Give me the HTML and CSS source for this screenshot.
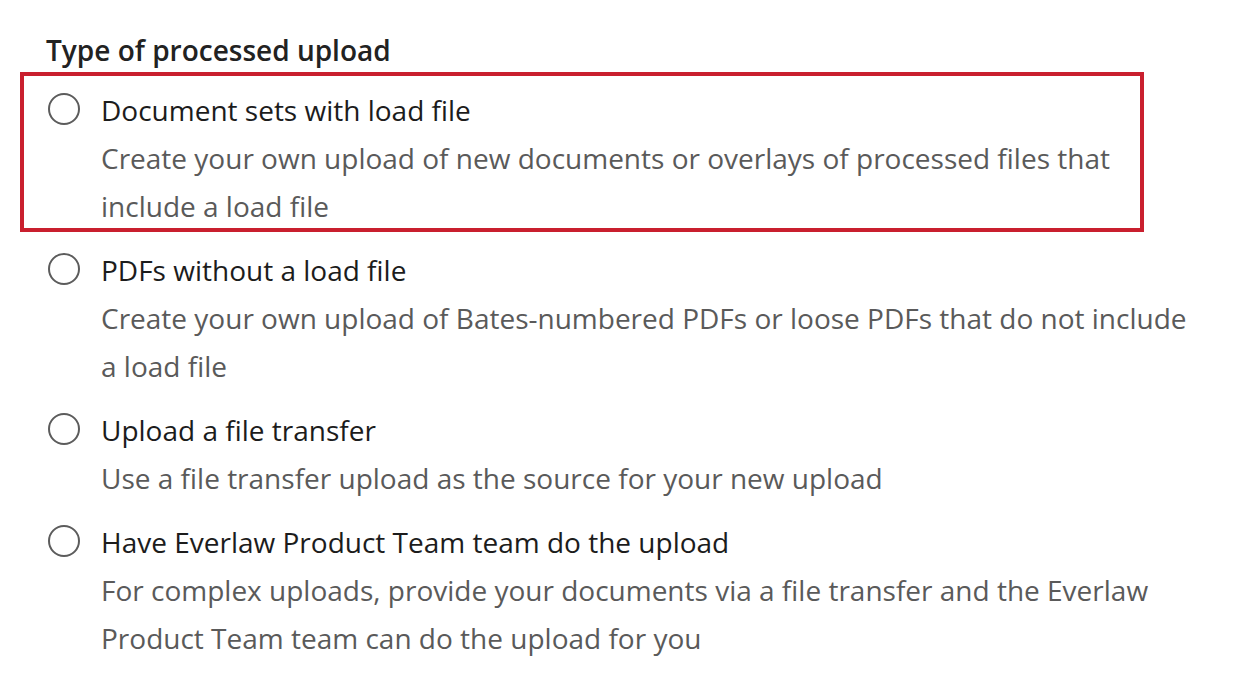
FILE: index.html
```html
<!DOCTYPE html>
<html lang="en">
<head>
  <meta charset="UTF-8">
  <title>Type of processed upload</title>
  <link rel="stylesheet" href="styles.css">
</head>
<body>
  <div class="panel">
    <h2 class="panel-title">Type of processed upload</h2>

    <div class="option-list" role="radiogroup">
      <label class="option is-highlighted">
        <input type="radio" name="uploadType" class="option-input">
        <span class="radio"></span>
        <span class="option-body">
          <span class="option-title">Document sets with load file</span>
          <span class="option-desc">Create your own upload of new documents or overlays of processed files that include a load file</span>
        </span>
      </label>

      <label class="option">
        <input type="radio" name="uploadType" class="option-input">
        <span class="radio"></span>
        <span class="option-body">
          <span class="option-title">PDFs without a load file</span>
          <span class="option-desc">Create your own upload of Bates-numbered PDFs or loose PDFs that do not include a load file</span>
        </span>
      </label>

      <label class="option">
        <input type="radio" name="uploadType" class="option-input">
        <span class="radio"></span>
        <span class="option-body">
          <span class="option-title">Upload a file transfer</span>
          <span class="option-desc">Use a file transfer upload as the source for your new upload</span>
        </span>
      </label>

      <label class="option">
        <input type="radio" name="uploadType" class="option-input">
        <span class="radio"></span>
        <span class="option-body">
          <span class="option-title">Have Everlaw Product Team team do the upload</span>
          <span class="option-desc">For complex uploads, provide your documents via a file transfer and the Everlaw Product Team team can do the upload for you</span>
        </span>
      </label>
    </div>
  </div>
</body>
</html>
```

FILE: styles.css
```css
:root {
  --text: #1c1c1c;
  --text-secondary: #5a5a5a;
  --radio-border: #5c5c5c;
  --highlight: #c91f2e;
  --line: 48px;
}

* {
  margin: 0;
  padding: 0;
  box-sizing: border-box;
}

body {
  font-family: "Open Sans", "Liberation Sans", sans-serif;
  font-size: 28px;
  color: var(--text);
  background: #ffffff;
  -webkit-font-smoothing: antialiased;
}

.panel {
  padding: 32px 50px 0 20px;
}

.panel-title {
  font-size: 28px;
  font-weight: 600;
  line-height: 36px;
  color: #222222;
  margin: 0 0 18px 26px;
}

.option-list {
  display: flex;
  flex-direction: column;
  gap: 16px;
}

.option {
  position: relative;
  display: flex;
  align-items: flex-start;
  gap: 21px;
  padding-left: 28px;
  cursor: pointer;
}

/* review highlight drawn over the first option */
.option.is-highlighted::after {
  content: "";
  position: absolute;
  top: -14px;
  left: 0;
  right: 52px;
  bottom: -2px;
  border: 4px solid var(--highlight);
  pointer-events: none;
}

.option-input {
  position: absolute;
  opacity: 0;
  width: 0;
  height: 0;
}

.radio {
  flex-shrink: 0;
  width: 32px;
  height: 32px;
  margin-top: 7px;
  border: 2px solid var(--radio-border);
  border-radius: 50%;
  background: #ffffff;
}

.option-body {
  display: flex;
  flex-direction: column;
  line-height: var(--line);
}

.option-title {
  color: var(--text);
}

.option-desc {
  color: var(--text-secondary);
}
```
